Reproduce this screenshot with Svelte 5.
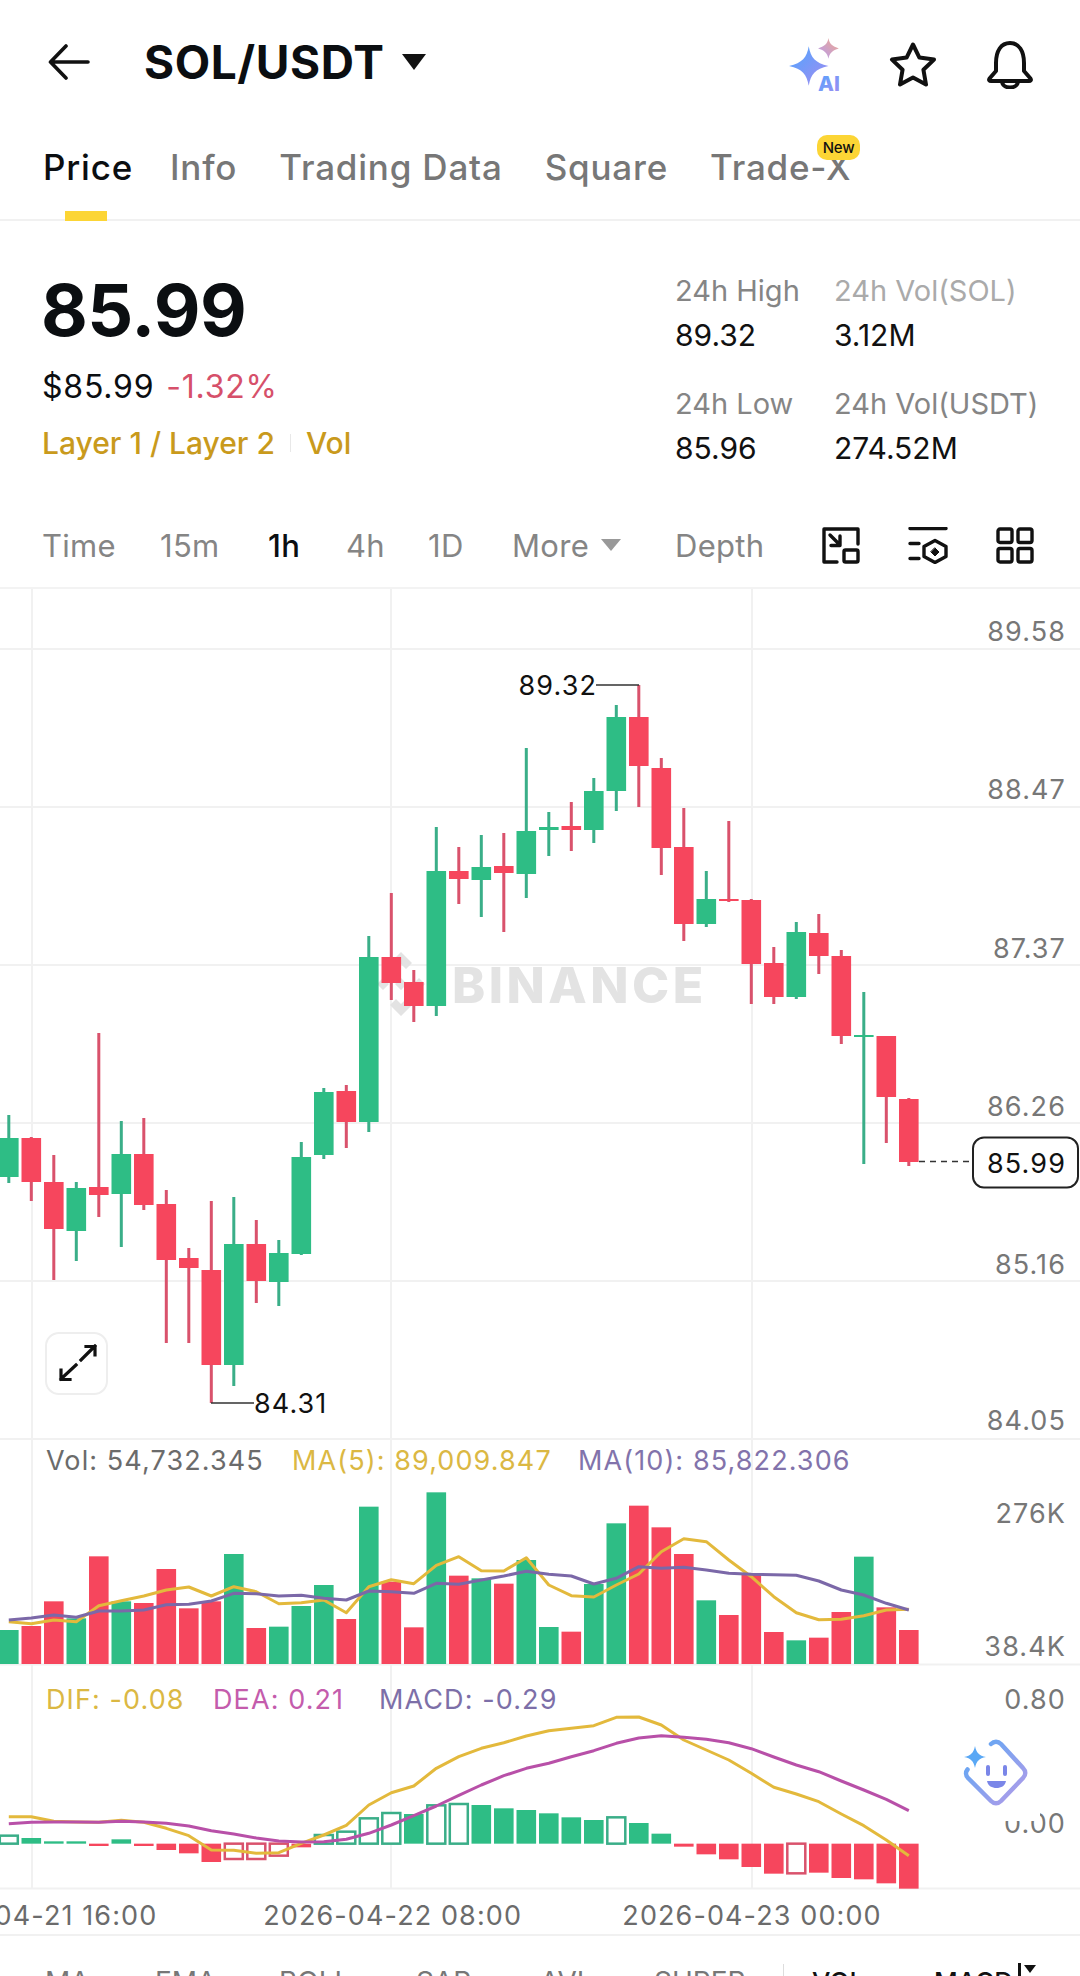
<script>
  const RED = "#f6465d";
  const GREEN = "#2ebd85";

  const tabs = ["Price", "Info", "Trading Data", "Square", "Trade-X"];
  const intervals = [
    { label: "Time", w: 118 },
    { label: "15m", w: 108 },
    { label: "1h", w: 78 },
    { label: "4h", w: 82 },
    { label: "1D", w: 84 },
  ];
  const gridY = [649, 807, 965, 1123, 1281, 1439];
  const gridX = [32, 391, 752];
  const axis = [
    ["89.58", 641],
    ["88.47", 799],
    ["87.37", 958],
    ["86.26", 1116],
    ["85.16", 1274],
    ["84.05", 1430],
  ];
  const indicators = [
    ["MA", 45],
    ["EMA", 155],
    ["BOLL", 279],
    ["SAR", 416],
    ["AVL", 540],
    ["SUPER", 654],
    ["VOL", 812],
    ["MACD", 934],
  ];

  // g = green, r = red: high, body top, body bottom, low
  const candles = [
    ["g", 1115, 1138, 1177, 1183],
    ["r", 1137, 1138, 1182, 1201],
    ["r", 1155, 1182, 1229, 1280],
    ["g", 1182, 1188, 1231, 1261],
    ["r", 1033, 1187, 1195, 1217],
    ["g", 1121, 1154, 1194, 1247],
    ["r", 1118, 1154, 1205, 1210],
    ["r", 1190, 1204, 1260, 1343],
    ["r", 1248, 1258, 1268, 1343],
    ["r", 1201, 1270, 1365, 1403],
    ["g", 1197, 1244, 1365, 1386],
    ["r", 1220, 1244, 1281, 1303],
    ["g", 1240, 1253, 1282, 1306],
    ["g", 1142, 1157, 1254, 1255],
    ["g", 1088, 1092, 1155, 1159],
    ["r", 1085, 1091, 1122, 1148],
    ["g", 936, 957, 1122, 1132],
    ["r", 893, 957, 983, 1000],
    ["r", 970, 982, 1006, 1022],
    ["g", 827, 871, 1006, 1016],
    ["r", 847, 871, 879, 904],
    ["g", 835, 867, 880, 917],
    ["r", 833, 866, 873, 932],
    ["g", 748, 831, 874, 898],
    ["g", 812, 827, 830, 856],
    ["r", 802, 826, 830, 851],
    ["g", 778, 791, 830, 843],
    ["g", 705, 717, 791, 811],
    ["r", 685, 717, 766, 807],
    ["r", 758, 768, 848, 875],
    ["r", 808, 847, 924, 941],
    ["g", 871, 899, 924, 927],
    ["r", 821, 899, 901, 902],
    ["r", 899, 900, 964, 1004],
    ["r", 947, 963, 997, 1004],
    ["g", 922, 932, 997, 999],
    ["r", 914, 933, 956, 974],
    ["r", 950, 956, 1036, 1044],
    ["g", 992, 1035, 1037, 1164],
    ["r", 1036, 1036, 1097, 1143],
    ["r", 1098, 1099, 1162, 1166],
  ];

  const volTops = [
    570, 558, 484, 535, 349, 484, 489, 387, 505, 484, 342, 564, 560, 498, 435, 537, 200, 425, 562,
    157, 407, 415, 431, 360, 561, 575, 432, 250, 197, 262, 342, 481, 525, 405, 576, 601, 593, 516,
    350, 502, 570,
  ];
  const ma5 = [
    545, 551, 540, 545, 497, 482, 468, 450, 441, 468, 440, 455, 491, 488, 480, 518, 440, 419, 431,
    376, 350, 392, 393, 353, 435, 467, 471, 435, 402, 335, 296, 305, 360, 410, 470, 518, 539, 538,
    527, 510, 508,
  ];
  const ma10 = [
    540, 534, 525, 532, 513, 513, 510, 494, 493, 483, 460, 461, 468, 466, 475, 480, 453, 455, 460,
    430, 433, 420, 408, 394, 403, 408, 432, 415, 380, 385, 382, 390, 400, 403, 404, 406, 423, 450,
    465, 490, 510,
  ];

  // macd bars, offset from zero line in crop px; second value = hollow
  const macd = [
    [-24, 1], [-17], [-7], [-7], [7], [-13], [7], [19], [29], [55], [46, 1], [46, 1], [36, 1], [11],
    [-26, 1], [-36, 1], [-76, 1], [-92, 1], [-89], [-115, 1], [-119, 1], [-116], [-106], [-101],
    [-91], [-79], [-71], [-79, 1], [-62], [-30], [9], [32], [47], [70], [90], [89, 1], [87], [103],
    [107], [119], [135],
  ];
  const dif = [
    470, 470, 484, 486, 487, 481, 487, 505, 527, 570, 571, 580, 578, 550, 525, 496, 435, 398, 378,
    325, 290, 265, 248, 228, 212, 205, 197, 172, 171, 195, 240, 270, 300, 340, 382, 402, 425, 462,
    497, 540, 587,
  ];
  const dea = [
    491, 487, 486, 486, 487, 484, 486, 490, 498, 512, 522, 534, 543, 546, 545, 538, 520, 495, 467,
    438, 406, 375, 347, 325, 310, 290, 272, 250, 234, 227, 232, 238, 248, 266, 291, 315, 335, 363,
    390, 418, 452,
  ];

  const cx = (i) => 8.8 + 22.5 * i;
  const line = (vals, base) => vals.map((p, i) => cx(i) + "," + (base + p / 3).toFixed(1)).join(" ");
  const zero = 1660 + 551 / 3;
</script>

<div class="page">
  <header class="topbar">
    <div class="left">
      <svg class="back" viewBox="0 0 42 36" width="42" height="36" fill="none" stroke="#111" stroke-width="3.6" stroke-linecap="round" stroke-linejoin="round">
        <path d="M40 18H3M18 2 2.5 18 18 34" />
      </svg>
      <span class="pair">SOL/USDT</span>
      <span class="caret"></span>
    </div>
    <div class="actions">
      <svg class="ai-icon" viewBox="0 0 54 52" width="56" height="54">
        <defs>
          <linearGradient id="ai" x1="0" y1="0" x2="1" y2="1">
            <stop offset="0" stop-color="#4ea6ff" />
            <stop offset="1" stop-color="#a48bf0" />
          </linearGradient>
          <linearGradient id="ai2" x1="0" y1="1" x2="1" y2="0">
            <stop offset="0" stop-color="#b59cf0" />
            <stop offset="1" stop-color="#f0a98f" />
          </linearGradient>
          <linearGradient id="face" x1="0" y1="0" x2="1" y2="1">
            <stop offset="0" stop-color="#5aa8f5" />
            <stop offset="1" stop-color="#b49be8" />
          </linearGradient>
        </defs>
        <path fill="url(#ai)" d="M20 8C22 19 26 24 39 27 26 30 22 35 20 46 18 35 14 30 1 27 14 24 18 19 20 8Z" />
        <path fill="url(#ai2)" d="M39 0C40 6 43 8 49 10 43 12 40 14 39 20 38 14 35 12 29 10 35 8 38 6 39 0Z" />
        <text x="29" y="51" class="ai-text" fill="url(#ai)">AI</text>
      </svg>
      <svg viewBox="0 0 48 46" width="48" height="46" fill="none" stroke="#111" stroke-width="4" stroke-linejoin="round">
        <path d="M24 2.5 30.4 15.6 45 17.6 34.4 27.7 37 42.5 24 35.4 11 42.5 13.6 27.7 3 17.6 17.6 15.6Z" />
      </svg>
      <svg viewBox="0 0 46 48" width="46" height="48" fill="none" stroke="#111" stroke-width="4" stroke-linejoin="round">
        <path d="M9 22C9 10 14 2 23 2S37 10 37 22V30L43.5 37.5C44.5 39 43.5 40 42 40H4C2.5 40 1.500 39 2.500 37.500L9 30Z" />
        <path d="M15 40C15 44 18.500 46.500 23 46.500S31 44 31 40" />
      </svg>
    </div>
  </header>

  <nav class="tabs">
    {#each tabs as t, i}
      <span class="tab" class:active={i === 0}>
        {t}
        {#if t === "Trade-X"}<em class="new">New</em>{/if}
      </span>
    {/each}
  </nav>

  <section class="summary">
    <div class="quote">
      <div class="last">85.99</div>
      <div class="fiat">$85.99 <span class="chg">-1.32%</span></div>
      <div class="cats">Layer 1 / Layer 2<i></i>Vol</div>
    </div>
    <div class="stats">
      <div class="stat"><label>24h High</label><b>89.32</b></div>
      <div class="stat"><label class="pale">24h Vol(SOL)</label><b>3.12M</b></div>
      <div class="stat"><label>24h Low</label><b>85.96</b></div>
      <div class="stat"><label>24h Vol(USDT)</label><b>274.52M</b></div>
    </div>
  </section>

  <div class="toolbar">
    {#each intervals as it}
      <span class="iv" class:on={it.label === "1h"} style="width:{it.w}px">{it.label}</span>
    {/each}
    <span class="iv more">More<u></u></span>
    <span class="iv depth">Depth</span>
    <div class="tools">
      <svg viewBox="0 0 38 37" width="38" height="37" fill="none" stroke="#111" stroke-width="3.4" stroke-linecap="round" stroke-linejoin="round">
        <path d="M15 35H2V2H36V17" />
        <rect x="22" y="23" width="14" height="12" rx="1.500" />
        <path d="M8 8 18 18M18 9V18.500H9" />
      </svg>
      <svg viewBox="0 0 40 37" width="40" height="37" fill="none" stroke="#111" stroke-width="3.4" stroke-linecap="round" stroke-linejoin="round">
        <path d="M2 3H38M2 18H11M2 33H11M27 15 38 21V31L27 37 16 31V21Z" transform="translate(0 -1.500)" />
        <path d="M27 21 31 25 27 29 23 25Z" fill="#111" stroke-width="1" />
      </svg>
      <svg viewBox="0 0 38 37" width="38" height="37" fill="none" stroke="#111" stroke-width="3.4" stroke-linejoin="round">
        <rect x="2" y="2" width="14" height="13.500" rx="2" />
        <rect x="22" y="2" width="14" height="13.500" rx="2" />
        <rect x="2" y="21.500" width="14" height="13.500" rx="2" />
        <rect x="22" y="21.500" width="14" height="13.500" rx="2" />
      </svg>
    </div>
  </div>

  <div class="chart">
    <svg viewBox="0 589 1080 1347" width="1080" height="1347">
      {#each gridX as x}
        <line x1={x} x2={x} y1="589" y2="1888" class="grid" />
      {/each}
      {#each gridY as y}
        <line x1="0" x2="1080" y1={y} y2={y} class="grid" />
      {/each}
      <line x1="0" x2="1080" y1="1664.500" y2="1664.500" class="grid" />
      <line x1="0" x2="1080" y1="1888.500" y2="1888.500" class="grid" />
      <line x1="0" x2="1080" y1="1935" y2="1935" class="grid" />

      <!-- watermark -->
      <g fill="#e3e3e3">
        <path d="M401 952 412 963 406 969 401 964 396 969 390 963ZM383 978 389 984 383 990 377 984ZM419 978 425 984 419 990 413 984ZM401 978 407 984 401 990 395 984ZM396 999 401 1004 406 999 412 1005 401 1016 390 1005Z" />
        <text x="452" y="1003" class="mark">BINANCE</text>
      </g>

      {#each candles as [c, hi, top, bot, lo], i}
        <rect x={cx(i) - 1.5} y={hi} width="3" height={lo - hi} fill={c === "g" ? "#3aae88" : "#d9526c"} />
        <rect x={cx(i) - 9.8} y={top} width="19.600" height={Math.max(bot - top, 2)} fill={c === "g" ? GREEN : RED} />
      {/each}

      <!-- high / low markers -->
      <path d="M596 685H639M211 1403H254" stroke="#333" stroke-width="1.500" fill="none" />
      <text x="597" y="695" text-anchor="end" class="tick dark">89.32</text>
      <text x="254" y="1413" class="tick dark">84.31</text>

      {#each axis as [v, y]}
        <text x="1066" {y} text-anchor="end" class="tick">{v}</text>
      {/each}

      <path d="M919 1161.500H970" stroke="#333" stroke-width="1.500" stroke-dasharray="6 5" />
      <rect x="973" y="1137.500" width="105" height="50" rx="11" fill="#fff" stroke="#222" stroke-width="2" />
      <text x="1066" y="1173" text-anchor="end" class="tick dark">85.99</text>

      <!-- volume -->
      <text y="1470" class="tick">
        <tspan x="46" fill="#6b6b6b">Vol: 54,732.345</tspan>
        <tspan x="292" fill="#dbb843">MA(5): 89,009.847</tspan>
        <tspan x="578" fill="#8273ab">MA(10): 85,822.306</tspan>
      </text>
      {#each volTops as p, i}
        <rect x={cx(i) - 9.8} y={1440 + p / 3} width="19.600" height={1664 - 1440 - p / 3} fill={candles[i][0] === "g" ? GREEN : RED} />
      {/each}
      <polyline points={line(ma5, 1440)} fill="none" stroke="#e3b93c" stroke-width="3" stroke-linejoin="round" />
      <polyline points={line(ma10, 1440)} fill="none" stroke="#7b68a8" stroke-width="3" stroke-linejoin="round" />
      <text x="1066" y="1523" text-anchor="end" class="tick">276K</text>
      <text x="1066" y="1656" text-anchor="end" class="tick">38.4K</text>

      <!-- macd -->
      <text y="1709" class="tick">
        <tspan x="46" fill="#dbb843">DIF: -0.08</tspan>
        <tspan x="213" fill="#c45cac">DEA: 0.21</tspan>
        <tspan x="379" fill="#7d6fa8">MACD: -0.29</tspan>
      </text>
      {#each macd as [d, hollow], i}
        {@const h = Math.abs(d) / 3}
        {@const y = d < 0 ? zero - h : zero}
        {#if hollow}
          <rect x={cx(i) - 9} y={y} width="18" height={h} fill="#fff" stroke={d < 0 ? "#3aae88" : "#d9526c"} stroke-width="2.500" />
        {:else}
          <rect x={cx(i) - 9.8} y={y} width="19.600" height={h} fill={d < 0 ? GREEN : RED} />
        {/if}
      {/each}
      <polyline points={line(dif, 1660)} fill="none" stroke="#e3b93c" stroke-width="3" stroke-linejoin="round" />
      <polyline points={line(dea, 1660)} fill="none" stroke="#b850a8" stroke-width="3" stroke-linejoin="round" />
      <text x="1066" y="1709" text-anchor="end" class="tick">0.80</text>
      <text x="1066" y="1833" text-anchor="end" class="tick">0.00</text>

      <text y="1925" text-anchor="middle" class="tick axis-time">
        <tspan x="38">2026-04-21 16:00</tspan>
        <tspan x="397">2026-04-22 08:00</tspan>
        <tspan x="752">2026-04-23 00:00</tspan>
      </text>
    </svg>

    <button class="expand" aria-label="expand">
      <svg viewBox="0 0 40 40" width="40" height="40" fill="none" stroke="#111" stroke-width="3.200" stroke-linecap="square">
        <path d="M4 35 19 21M4 26V35.500H13M24 16 38 2M29 2.500H38V11" />
      </svg>
    </button>

    <div class="bot">
      <svg viewBox="0 0 70 70" width="70" height="70" fill="none">
        <path d="M32 6C35 3 39 3 42 6L64 30C67 33 67 37 64 40L42 63C39 66 35 66 32 63L9 40C6.500 37.500 6.500 34 8.500 31.500" stroke="url(#face)" stroke-width="4.500" stroke-linecap="round" />
        <path d="M16 8C17.500 15 20 17.500 27 19 20 20.500 17.500 23 16 30 14.500 23 12 20.500 5 19 12 17.500 14.500 15 16 8Z" fill="#5aa8f5" />
        <rect x="27" y="27" width="4" height="11" rx="2" fill="#7a86e8" />
        <rect x="44" y="27" width="4" height="11" rx="2" fill="#7a86e8" />
        <path d="M28 43H47C46 48 42 50 37.500 50S29 48 28 43Z" fill="#7a86e8" />
      </svg>
    </div>
  </div>

  <div class="ind-row">
    {#each indicators as [t, x], i}
      <span class="ind" class:dark={i > 5} style="left:{x}px">{t}</span>
    {/each}
    <i class="ind-div"></i>
    <span class="ind-set"></span>
  </div>
</div>

<style>
  :global(body) {
    background: #fff;
  }
  .page {
    width: 1080px;
    height: 1976px;
    overflow: hidden;
    font-family: Inter, "Liberation Sans", sans-serif;
    color: #0b0e11;
    background: #fff;
  }
  .topbar {
    height: 124px;
    box-sizing: border-box;
    padding: 38px 47px 0 48px;
    display: flex;
    justify-content: space-between;
    align-items: flex-start;
  }
  .left {
    display: flex;
    align-items: center;
    height: 48px;
  }
  .back {
    margin-right: 54px;
  }
  .pair {
    font-size: 46px;
    font-weight: 700;
    letter-spacing: 0.6px;
  }
  .caret {
    margin-left: 18px;
    border-top: 16px solid #111;
    border-left: 12px solid transparent;
    border-right: 12px solid transparent;
  }
  .actions {
    display: flex;
    gap: 50px;
    align-items: center;
  }
  .ai-icon {
    margin-right: -5px;
  }
  .ai-text {
    font-size: 20px;
    font-weight: 800;
  }
  .tabs {
    height: 97px;
    box-sizing: border-box;
    padding: 21px 0 0 43px;
    display: flex;
    gap: 42px;
    border-bottom: 2px solid #f1f1f1;
    font-size: 35px;
    font-weight: 500;
    letter-spacing: 0.8px;
    color: #777;
  }
  .tab {
    position: relative;
    height: 76px;
    line-height: 44px;
  }
  .tab.active {
    color: #0b0e11;
    margin-right: -5px;
  }
  .tab.active::after {
    content: "";
    position: absolute;
    left: 22px;
    bottom: 0;
    width: 42px;
    height: 10px;
    background: #fcd535;
  }
  .new {
    position: absolute;
    left: 107px;
    top: -10px;
    width: 43px;
    height: 25px;
    border-radius: 10px;
    background: #fcd535;
    color: #111;
    font-size: 15px;
    font-weight: 500;
    font-style: normal;
    letter-spacing: -0.2px;
    line-height: 25px;
    text-align: center;
  }
  .summary {
    height: 280px;
    box-sizing: border-box;
    padding: 47px 0 0 41px;
    display: flex;
    justify-content: space-between;
  }
  .last {
    font-size: 72px;
    font-weight: 700;
    line-height: 84px;
    letter-spacing: -0.5px;
  }
  .fiat {
    margin-top: 15px;
    margin-left: 1px;
    font-size: 32px;
    line-height: 40px;
    letter-spacing: 0.8px;
  }
  .chg {
    color: #d6506a;
    margin-left: 2px;
  }
  .cats {
    margin-top: 16px;
    margin-left: 1px;
    font-size: 30px;
    font-weight: 500;
    line-height: 40px;
    color: #c99a1c;
    display: flex;
    align-items: center;
  }
  .cats i {
    width: 1px;
    height: 18px;
    background: #e8e8e8;
    margin: 0 15px;
  }
  .stats {
    width: 405px;
    display: grid;
    grid-template-columns: 159px 246px;
    row-gap: 23px;
    align-content: start;
  }
  .stat {
    display: flex;
    flex-direction: column;
    font-size: 29px;
    line-height: 45px;
  }
  .stat label {
    color: #858585;
  }
  .stat label.pale {
    color: #aaa;
  }
  .stat b {
    font-size: 30px;
    font-weight: 400;
    color: #111;
  }
  .toolbar {
    height: 88px;
    box-sizing: border-box;
    padding: 2px 0 0 42px;
    display: flex;
    align-items: center;
    font-size: 31px;
    color: #858585;
    letter-spacing: 0.3px;
    border-bottom: 2px solid #f3f3f3;
  }
  .iv {
    display: block;
  }
  .iv.on {
    color: #0b0e11;
    font-weight: 500;
  }
  .more {
    display: flex;
    align-items: center;
    width: 163px;
  }
  .more u {
    margin-left: 12px;
    border-top: 12px solid #999;
    border-left: 10px solid transparent;
    border-right: 10px solid transparent;
  }
  .tools {
    margin-left: 58px;
    display: flex;
    gap: 48px;
  }
  .chart {
    position: relative;
    height: 1347px;
  }
  .chart svg {
    display: block;
  }
  .grid {
    stroke: #f1f1f1;
    stroke-width: 2;
  }
  .tick {
    font-size: 27px;
    letter-spacing: 1.1px;
    fill: #777;
  }
  .tick.dark {
    fill: #111;
  }
  .axis-time {
    fill: #6b6b6b;
  }
  .mark {
    font-size: 50px;
    font-weight: 800;
    letter-spacing: 3.500px;
  }
  .expand {
    position: absolute;
    left: 45px;
    top: 743px;
    width: 63px;
    height: 63px;
    padding: 0;
    background: #fff;
    border: 2px solid #eee;
    border-radius: 14px;
    display: flex;
    align-items: center;
    justify-content: center;
  }
  .bot {
    position: absolute;
    left: 948px;
    top: 1136px;
    width: 92px;
    height: 96px;
    background: #fff;
    display: flex;
    align-items: center;
    justify-content: center;
  }
  .ind-row {
    position: relative;
    height: 41px;
    overflow: hidden;
    font-size: 28px;
    color: #777;
  }
  .ind {
    position: absolute;
    top: 29px;
    line-height: 34px;
  }
  .ind.dark {
    color: #111;
    font-weight: 500;
    font-size: 26px;
  }
  .ind-div {
    position: absolute;
    left: 783px;
    top: 28px;
    width: 1px;
    height: 14px;
    background: #ddd;
  }
  .ind-set {
    position: absolute;
    left: 1018px;
    top: 27px;
    width: 3px;
    height: 14px;
    background: #111;
  }
  .ind-set::after {
    content: "";
    position: absolute;
    left: 6px;
    top: 2px;
    border-top: 8px solid #111;
    border-left: 6px solid transparent;
    border-right: 6px solid transparent;
  }
</style>
